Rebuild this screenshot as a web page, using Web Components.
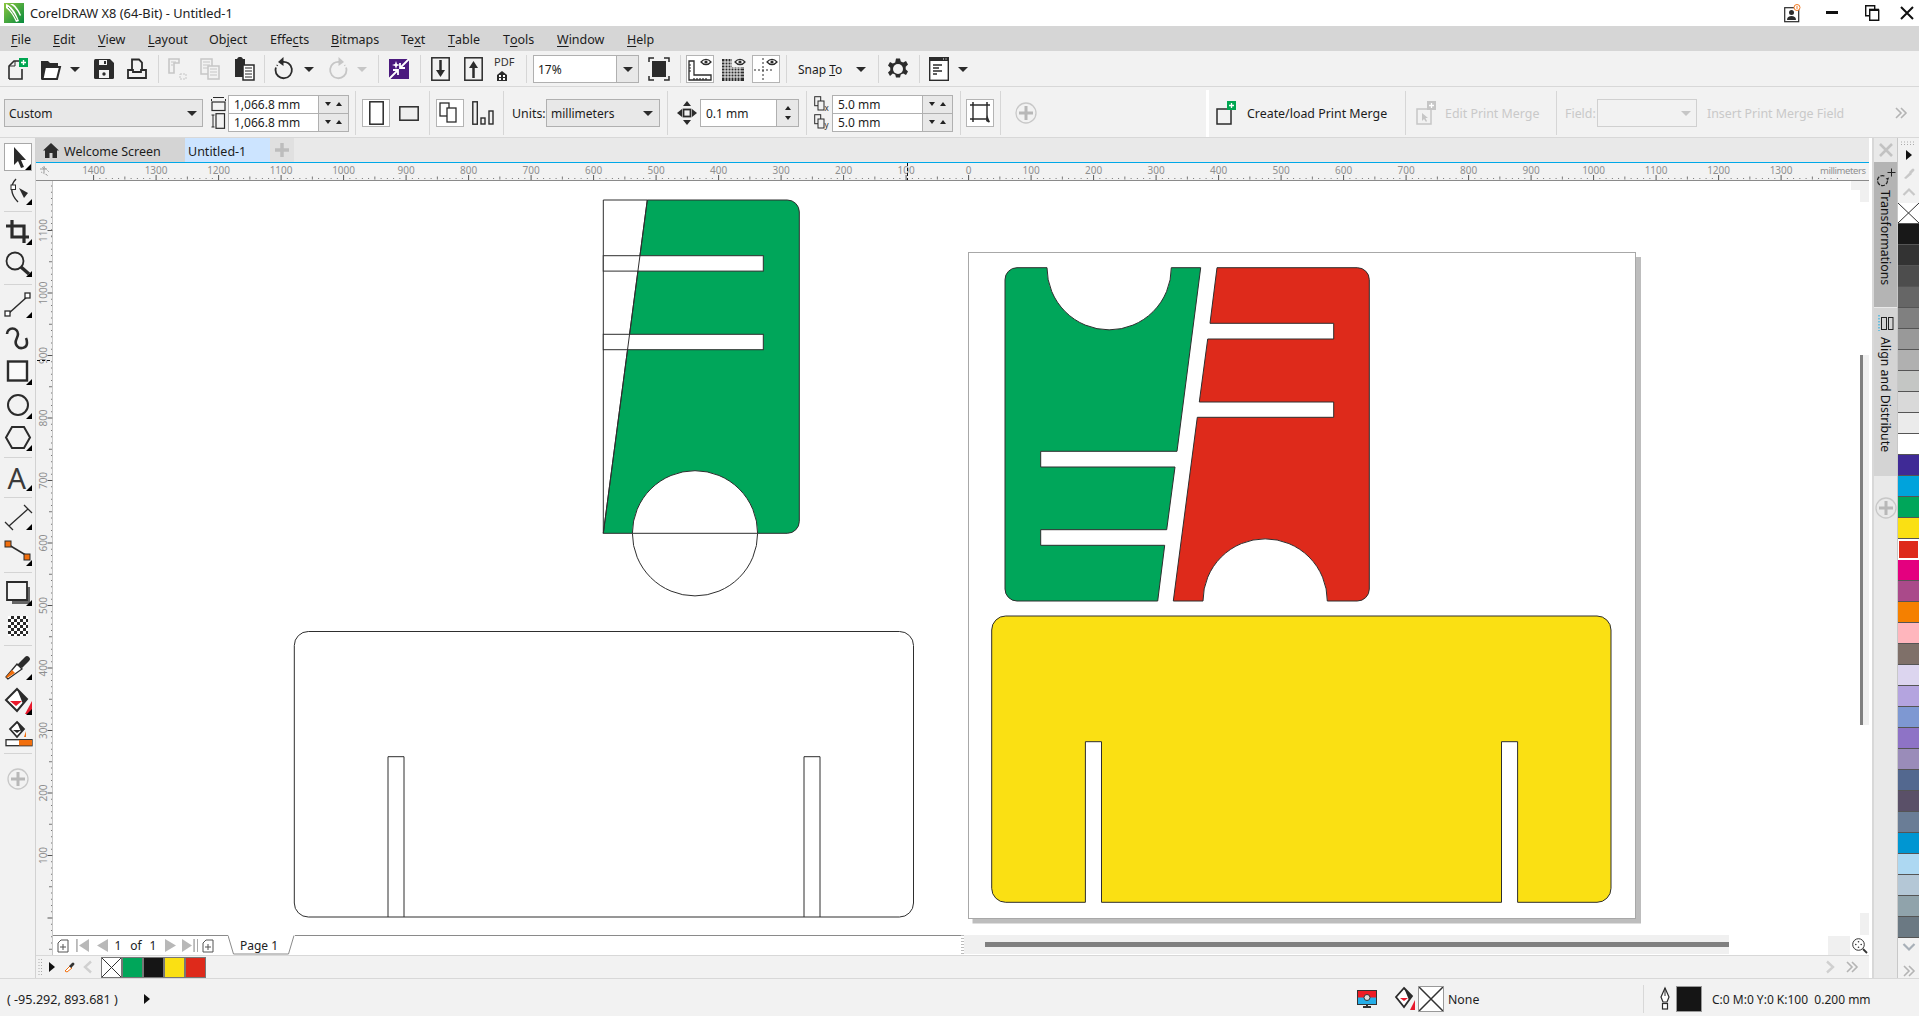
<!DOCTYPE html>
<html><head><meta charset="utf-8"><title>CorelDRAW X8</title>
<style>
html,body{margin:0;padding:0;height:100%;overflow:hidden;background:#f2f2f2}
body{font-family:"Noto Sans","Open Sans",sans-serif;font-size:12px;color:#1c1c1c}
</style></head><body>
<cdr-app>
  <cdr-titlebar slot="top"></cdr-titlebar>
  <cdr-menubar slot="top"></cdr-menubar>
  <cdr-toolbar slot="top"></cdr-toolbar>
  <cdr-propbar slot="top"></cdr-propbar>
  <cdr-toolbox slot="left"></cdr-toolbox>
  <cdr-tabs slot="center"></cdr-tabs>
  <cdr-hruler slot="center"></cdr-hruler>
  <cdr-stage slot="center"></cdr-stage>
  <cdr-colorbar slot="center"></cdr-colorbar>
  <cdr-docker slot="right"></cdr-docker>
  <cdr-palette slot="right"></cdr-palette>
  <cdr-statusbar slot="bottom"></cdr-statusbar>
</cdr-app>
<script>
const D='#2b2b2b',G='#c6c6c6';
const tri=(c=D)=>`<path d="M0 0h10L5 5z" fill="${c}"/>`;
const eye=`<path d="M13 5c3-3.5 7-3.5 10 0c-3 3.5-7 3.5-10 0z" fill="#fff" stroke="${D}" stroke-width="1.2"/><circle cx="18" cy="5" r="1.6" fill="${D}"/>`;
const corner=(c='#000')=>`<path d="M30 21v6h-6z" fill="${c}"/>`;
const ICON={
 logo:[20,20,`<defs><linearGradient id="lg" x1="0" y1="0" x2="1" y2="1"><stop offset="0" stop-color="#8cc63f"/><stop offset="1" stop-color="#078a3f"/></linearGradient></defs><rect width="20" height="20" fill="url(#lg)"/><path d="M2 1c5 2 9 6 13 17l-3 1C9 12 6 8 2 5z" fill="#fff"/><path d="M6 1c4 2 8 7 10 12l1-1C15 7 12 3 9 1z" fill="#fff"/><path d="M4 4c3 3 6 7 9 13" stroke="#4a9e35" fill="none"/>`],
 user:[16,18,`<rect x=".7" y="3.7" width="14" height="14" fill="#fff" stroke="${D}" stroke-width="1.2"/><circle cx="7.5" cy="8.5" r="2.5" fill="${D}"/><path d="M3 16c0-3 2-4 4.500-4s4.500 1 4.500 4z" fill="${D}"/><circle cx="13" cy="3.500" r="3" fill="#fff" stroke="#f47a20"/><path d="M13 2v3" stroke="#f47a20"/>`],
 min:[12,4,`<rect width="12" height="3" fill="#111"/>`],
 restore:[14,16,`<path d="M.7 .7h9v10h-9z" fill="none" stroke="#111" stroke-width="1.4"/><path d="M4.700 5.200h9v10h-9z" fill="#fff" stroke="#111" stroke-width="1.400"/><path d="M4 4.700h10" stroke="#111" stroke-width="2"/>`],
 close:[14,14,`<path d="M1 1l12 12M13 1L1 13" stroke="#111" stroke-width="2"/>`],
 new:[22,22,`<path d="M2 21V8l5-5h5M15 11v10H2" fill="none" stroke="${D}" stroke-width="1.600"/><path d="M8 3v5H2" fill="none" stroke="${D}" stroke-width="1"/><rect x="12" y="0" width="9" height="9" fill="#00a651"/><path d="M16.500 2v5M14 4.500h5" stroke="#fff" stroke-width="1.400"/>`],
 open:[20,22,`<path d="M0 3h7l2 2h8v4H4l-2 12H0z" fill="${D}"/><path d="M4 9h15l-3 12H1.500z" fill="#fff" stroke="${D}" stroke-width="2"/>`],
 t:[10,5,tri()],td:[10,5,tri(G)],
 save:[20,20,`<path d="M0 1.500Q0 0 1.500 0H16l4 4v14.500q0 1.500-1.500 1.500H1.500Q0 20 0 18.500z" fill="${D}"/><rect x="5" y="1" width="8" height="5" fill="#f2f2f2"/><rect x="10" y="2" width="2" height="3" fill="${D}"/><rect x="5" y="11" width="10" height="8" fill="#f2f2f2"/><circle cx="10" cy="15" r="1.700" fill="${D}"/>`],
 print:[20,22,`<path d="M5 12V1.500h7l3 3V12" fill="none" stroke="${D}" stroke-width="1.800"/><path d="M1 12h5v2h8v-2h5v8H1z" fill="none" stroke="${D}" stroke-width="1.800"/>`],
 cutD:[20,22,`<path d="M1 1h10v4h-5v10H1z" fill="none" stroke="${G}" stroke-width="1.600"/><path d="M3 4h5M3 7h2" stroke="${G}"/><path d="M12 16h6v5h-6z" fill="none" stroke="${G}" stroke-dasharray="2 1"/>`],
 copyD:[20,22,`<path d="M1 1h11v15H1z" fill="#f2f2f2" stroke="${G}" stroke-width="1.500"/><path d="M3 4h7M3 7h7M3 10h7" stroke="${G}"/><path d="M8 8h11v13H8z" fill="#f2f2f2" stroke="${G}" stroke-width="1.500"/><path d="M10 11h7M10 14h7M10 17h7" stroke="${G}"/>`],
 paste:[20,24,`<path d="M1 2h2q1-2 2-2h2q1 0 2 2h2v18H1z" fill="${D}"/><rect x="9" y="8" width="11" height="15" fill="#fff" stroke="${D}" stroke-width="1.500"/><path d="M11 11h7M11 14h7M11 17h7M11 20h7" stroke="${D}" stroke-width="1.200"/>`],
 undo:[20,24,`<path d="M8 5a8.200 8.200 0 1 1-6.500 8" fill="none" stroke="${D}" stroke-width="1.800"/><path d="M1.500 13a8 8 0 0 1 2-5" fill="none" stroke="${D}" stroke-width="1.800" stroke-dasharray="2.500 2"/><path d="M9.500 0v9L4 5z" fill="${D}"/>`],
 redo:[20,24,`<path d="M12 5a8.200 8.200 0 1 0 6.500 8" fill="none" stroke="${G}" stroke-width="1.800"/><path d="M18.500 13a8 8 0 0 0-2-5" fill="none" stroke="${G}" stroke-width="1.800" stroke-dasharray="2.500 2"/><path d="M10.500 0v9L16 5z" fill="${G}"/>`],
 purple:[20,20,`<rect width="20" height="20" fill="#4b1a7e"/><path d="M20 0L11 9M11 4v5h5" stroke="#fff" stroke-width="1.800" fill="none"/><path d="M0 20l9-9M4 11h5v5" stroke="#fff" stroke-width="1.800" fill="none"/><path d="M6 5l1-3 1 3 3 1-3 1-1 3-1-3-3-1z" fill="#fff"/>`],
 imp:[19,24,`<rect x=".8" y=".8" width="17.400" height="22.400" fill="none" stroke="${D}" stroke-width="1.500"/><path d="M9.500 3v12" stroke="${D}" stroke-width="2.500"/><path d="M5 13h9l-4.500 7z" fill="${D}"/>`],
 exp:[19,24,`<rect x=".8" y=".8" width="17.400" height="22.400" fill="none" stroke="${D}" stroke-width="1.500"/><path d="M9.500 21V9" stroke="${D}" stroke-width="2.500"/><path d="M5 11h9L9.500 4z" fill="${D}"/>`],
 pdf:[22,26,`<text x="0" y="10" font-family="Noto Sans,sans-serif" font-size="11" fill="#333">PDF</text><path d="M3 19l5-4 5 4v6H3z" fill="${D}"/><path d="M5 19h2v2H5zM9 19h2v2H9zM5 22h2v2H5zM9 22h2v2H9z" fill="#fff"/>`],
 fit:[20,24,`<path d="M0 5V1h5M15 1h5v4M20 19v4h-5M5 23H0v-4" fill="none" stroke="${D}" stroke-width="1.500"/><rect x="3" y="4" width="14" height="16" fill="${D}"/>`],
 rulers:[24,24,eye+`<path d="M1 4h5v14h17v5H1z" fill="none" stroke="${D}" stroke-width="1.300"/><path d="M1 8h2M1 11h2M1 14h2M9 23v-2M12 23v-2M15 23v-2M18 23v-2M6 23v-2" stroke="${D}" stroke-width="1.200"/>`],
 grid:[22,24,eye+`<path d="M0 2h10v8h12v14H0z" fill="${D}"/><path d="M3 2v22M6 2v22M9 2v22M12 10v14M15 10v14M18 10v14M0 5h10M0 8h10M0 11h22M0 14h22M0 17h22M0 20h22" stroke="#f2f2f2"/>`],
 guides:[24,24,eye+`<path d="M9 1v22M0 13h18" stroke="${D}" stroke-dasharray="2 2"/>`],
 gear:[22,24,`<path d="M9 1h4l.8 3 2.400 1 2.800-1.500 2 3.500-2.300 2.200v2.600l2.300 2.200-2 3.500-2.800-1.500-2.400 1-.8 3H9l-.8-3-2.400-1L3 18.500 1 15l2.300-2.200v-2.600L1 8l2-3.500L5.800 6l2.400-1z" fill="${D}" transform="translate(0,.5)"/><circle cx="11" cy="12" r="5" fill="#f2f2f2"/>`],
 win:[20,24,`<rect x=".7" y=".7" width="18.600" height="22.600" fill="#fff" stroke="${D}" stroke-width="1.400"/><rect y="0" width="20" height="4" fill="${D}"/><path d="M14 2h1M16.500 2h1" stroke="#fff"/><path d="M4 8h9M4 11h6M4 14h9M4 17h4" stroke="${D}" stroke-width="1.300"/>`],
 wh:[15,14,`<path d="M2 .5h11M.5 2v2M14.500 2v2" stroke="${D}"/><rect x="1" y="5" width="13" height="8.500" fill="none" stroke="${D}" stroke-width="1.200"/>`],
 hh:[14,16,`<path d="M.5 2h3M.5 14h3M2 2v12" stroke="${D}"/><rect x="5" y=".7" width="8.500" height="14.600" fill="none" stroke="${D}" stroke-width="1.200"/>`],
 port:[15,24,`<rect x=".8" y=".8" width="13.400" height="22.400" fill="#fff" stroke="${D}" stroke-width="1.500"/>`],
 land:[20,15,`<rect x=".8" y=".8" width="18.400" height="13.400" fill="#eee" stroke="${D}" stroke-width="1.500"/>`],
 allp:[22,22,`<rect x="1" y="1" width="9" height="13" fill="#fff" stroke="${D}" stroke-width="1.300"/><rect x="8" y="6" width="9" height="14" fill="#fff" stroke="${D}" stroke-width="1.300"/>`],
 curp:[22,24,`<rect x=".8" y=".8" width="4.500" height="22.400" fill="none" stroke="${D}" stroke-width="1.400"/><rect x="9" y="17" width="4" height="6" fill="none" stroke="${D}" stroke-width="1.400"/><rect x="17" y="10" width="4" height="13" fill="none" stroke="${D}" stroke-width="1.400"/>`],
 nudge:[20,24,`<path d="M10 0l4 5H6zM10 24l-4-5h8zM0 12l5-4v8zM20 12l-5 4V8z" fill="${D}"/><rect x="6.500" y="8.500" width="7" height="7" fill="none" stroke="${D}" stroke-width="1.800"/>`],
 dupx:[16,16,`<rect x=".7" y=".7" width="6" height="9" fill="none" stroke="${D}"/><rect x="4" y="5" width="6" height="9" fill="#f2f2f2" stroke="${D}"/><text x="10.500" y="15" font-family="Noto Sans,sans-serif" font-size="8" fill="${D}">x</text>`],
 dupy:[16,16,`<rect x=".7" y=".7" width="6" height="9" fill="none" stroke="${D}"/><rect x="4" y="5" width="6" height="9" fill="#f2f2f2" stroke="${D}"/><text x="10.500" y="14" font-family="Noto Sans,sans-serif" font-size="8" fill="${D}">y</text>`],
 treat:[20,22,`<path d="M3 3h14v14H3z" fill="none" stroke="${D}" stroke-width="1.400"/><path d="M0 3h3M3 0v3M17 0v3M17 3h3M0 17h3M3 17v3" stroke="${D}" stroke-width="1.500"/><path d="M17 13l3 7-1.500.5L16 19z" fill="${D}"/>`],
 plus:[22,22,`<circle cx="11" cy="11" r="10" fill="none" stroke="#c8c8c8" stroke-width="1.300"/><path d="M11 4v14M4 11h14" stroke="#b8b8b8" stroke-width="3"/>`],
 merge:[20,24,`<rect x="1" y="8" width="14" height="15" fill="none" stroke="${D}" stroke-width="1.500"/><rect x="11" y="0" width="9" height="9" fill="#00a651"/><path d="M15.500 2v5M13 4.500h5" stroke="#fff" stroke-width="1.300"/>`],
 mergeD:[20,24,`<rect x="1" y="8" width="14" height="15" fill="none" stroke="${G}" stroke-width="1.500"/><rect x="11" y="0" width="9" height="9" fill="${G}"/><path d="M15.500 2v5M13 4.500h5" stroke="#fff" stroke-width="1.300"/><path d="M6 12v8l2-2 2 3 1-1-1.500-3H12z" fill="${G}"/>`],
 more:[12,12,`<path d="M1 1l5 5-5 5M6 1l5 5-5 5" fill="none" stroke="#b4b4b4" stroke-width="1.600"/>`],
 home:[16,15,`<path d="M8 0l8 7.500h-2V15H9.500v-5h-3v5H2V7.500H0z" fill="#2d2d2d"/>`],
 plusTab:[14,14,`<path d="M7 0v14M0 7h14" stroke="#bdbdbd" stroke-width="3.500"/>`],
 rc:[12,12,`<path d="M5 1v7M1 4h7" stroke="#9a9a9a"/><path d="M2 7l6 3M5 2l5 5M3 2l2 2M7 9l2 2" stroke="#9a9a9a" stroke-dasharray="1 1"/>`],
 pick:[28,28,`<path d="M10 4v18l4-4 3 7 3-1-3-7h5z" fill="#2b2b2b"/><path d="M27 21v6h-6z" fill="#000"/>`],
 shape:[32,28,`<path d="M14 1C8 7 8 16 16 24" fill="none" stroke="${D}" stroke-width="1.400"/><rect x="9" y="7" width="4.500" height="4.500" fill="#fff" stroke="${D}"/><path d="M17 10l9 5-4 5z" fill="${D}"/>`+corner()],
 crop:[32,28,`<path d="M10 2v17h17M4 8h18v17" fill="none" stroke="${D}" stroke-width="3.200"/>`+corner()],
 zoom:[32,28,`<circle cx="13" cy="11" r="8.500" fill="none" stroke="${D}" stroke-width="1.800"/><path d="M19 17l8 7" stroke="${D}" stroke-width="3.500"/>`+corner()],
 line:[32,28,`<path d="M6 23L26 5" stroke="${D}" stroke-width="1.500"/><rect x="3" y="20" width="5" height="5" fill="#fff" stroke="${D}" stroke-width="1.300"/><rect x="23" y="2" width="5" height="5" fill="#fff" stroke="${D}" stroke-width="1.300"/>`+corner()],
 art:[32,28,`<path d="M5 9a5.500 5.500 0 0 1 11 0c0 5-5 7-1 12 3 4 10 2 10-3 0-2 0-3-1-5" fill="none" stroke="${D}" stroke-width="2.600"/>`],
 rect:[32,28,`<rect x="6" y="3.500" width="19" height="19" fill="#fafafa" stroke="${D}" stroke-width="2.400"/>`+corner()],
 ell:[32,28,`<circle cx="16" cy="13" r="10" fill="none" stroke="${D}" stroke-width="2"/>`+corner()],
 poly:[32,28,`<path d="M10 3h12l6 10.500L22 24H10L4 13.500z" fill="none" stroke="${D}" stroke-width="2"/>`+corner()],
 A:[32,28,`<text x="5.500" y="24.500" font-family="Noto Sans,sans-serif" font-size="29" fill="#3a3a3a">A</text>`+corner()],
 dim:[32,28,`<path d="M7 23L26 6M3 19l8 8M22 2l8 8" stroke="${D}" stroke-width="1.300"/>`+corner()],
 conn:[32,28,`<path d="M7 6l20 12" stroke="${D}" stroke-width="1.500"/><rect x="3" y="2" width="6" height="6" fill="#f26f0d" stroke="${D}"/><rect x="22" y="15" width="6" height="6" fill="#f26f0d" stroke="${D}"/>`+corner()],
 shad:[32,28,`<path d="M10 8h18v17H10z" fill="#666"/><path d="M5 3h20v18H5z" fill="#f5f5f5" stroke="${D}" stroke-width="1.800"/>`+corner()],
 transp:[20,20,`<defs><pattern id="ck" width="6" height="6" patternUnits="userSpaceOnUse"><rect width="6" height="6" fill="#2a2a2a"/><rect width="3" height="3" fill="#fff"/><rect x="3" y="3" width="3" height="3" fill="#fff"/></pattern></defs><rect width="20" height="20" fill="url(#ck)"/>`],
 drop:[32,28,`<path d="M6 26l-2-2 11-13 5 5z" fill="#fff" stroke="${D}" stroke-width="1.300"/><path d="M5 25l-1-1 6-7 3 3z" fill="#f26f0d"/><path d="M15 12l5-5 3-3a2.500 2.500 0 0 1 4 4l-3 3-1 1-3 3z" fill="${D}"/>`+corner()],
 fill:[32,28,`<path d="M15 1l10 10-10 12L4 12z" fill="#fff" stroke="${D}" stroke-width="2"/><path d="M15 1l10 10-4 5z" fill="${D}"/><path d="M8 13h12l-6 5z" fill="#e8192c"/><path d="M30 13v13h-7z" fill="#e8192c"/>`+corner()],
 smart:[32,28,`<path d="M15 1l7 7-7 8-7-8z" fill="#fff" stroke="${D}" stroke-width="1.800"/><path d="M15 1l7 7-3 3z" fill="${D}"/><path d="M11 9h8l-4 3z" fill="${D}"/><path d="M24 10v6h-2z" fill="#f26f0d"/><rect x="4" y="18.700" width="26" height="6" fill="#fff" stroke="${D}" stroke-width="1.300"/><rect x="17" y="19" width="13" height="5.500" fill="#f26f0d"/>`],
 addp:[12,14,`<path d="M1 13V4l3-3h7v12z" fill="none" stroke="#555"/><path d="M6 5v6M3 8h6" stroke="#555"/>`],
 first:[14,13,`<rect x="0" width="1.800" height="13" fill="#b8b8b8"/><path d="M13 0v13L3 6.500z" fill="#b8b8b8"/>`],
 prev:[11,13,`<path d="M11 0v13L0 6.500z" fill="#b8b8b8"/>`],
 next:[11,13,`<path d="M0 0v13l11-6.500z" fill="#b8b8b8"/>`],
 last:[14,13,`<rect x="12.200" width="1.800" height="13" fill="#b8b8b8"/><path d="M1 0v13l10-6.500z" fill="#b8b8b8"/>`],
 ptr:[6,10,`<path d="M0 0l6 5-6 5z" fill="#111"/>`],
 dropS:[10,10,`<path d="M1 9l5-5 2 2-5 4z" fill="#fff" stroke="#f26f0d"/><path d="M5 4l3-3a1.200 1.200 0 0 1 2 2L7 6z" fill="#333"/>`],
 dropD:[11,11,`<path d="M1 10l6-6 2 2-6 5z" fill="#c8c8c8"/><path d="M6 4l3-3a1.300 1.300 0 0 1 2 2L8 6z" fill="#c8c8c8"/>`],
 chL:[10,12,`<path d="M8 .5L2 6l6 5.500" fill="none" stroke="#d0d0d0" stroke-width="2.400"/>`],
 chR:[10,12,`<path d="M2 .5L8 6l-6 5.500" fill="none" stroke="#d0d0d0" stroke-width="2.400"/>`],
 chU:[12,8,`<path d="M.5 7L6 1.500 11.500 7" fill="none" stroke="#c8c8c8" stroke-width="2.200"/>`],
 chD:[12,8,`<path d="M.5 1L6 6.500 11.500 1" fill="none" stroke="#a8b0b8" stroke-width="2.200"/>`],
 zoomS:[15,15,`<circle cx="6.500" cy="6.500" r="5.800" fill="#fff" stroke="#333"/><circle cx="6.500" cy="3.800" r=".8" fill="#333"/><circle cx="6.500" cy="9.200" r=".8" fill="#333"/><circle cx="3.800" cy="6.500" r=".8" fill="#333"/><circle cx="9.200" cy="6.500" r=".8" fill="#333"/><path d="M11 11l4 4" stroke="#333" stroke-width="1.800"/>`],
 mon:[20,18,`<rect x=".5" y=".5" width="19" height="14" fill="#25aee8" stroke="#333"/><rect x="1" y="1" width="18" height="6.500" fill="#ee1c25"/><circle cx="10" cy="7.500" r="3" fill="#ddd" stroke="#333"/><path d="M6 17h8M10 14v3" stroke="#333" stroke-width="2"/>`],
 fillS:[20,24,`<path d="M9 1l8 8-8 11-8-10z" fill="#fff" stroke="${D}" stroke-width="1.800"/><path d="M9 1l8 8-3 4z" fill="${D}"/><path d="M5 11h8l-4 3z" fill="#e8192c"/><path d="M20 13v10h-5z" fill="#e8192c"/>`],
 pen:[10,22,`<path d="M5 0l4 9-2 5H3L1 9z" fill="#fff" stroke="${D}" stroke-width="1.200"/><path d="M5 0v8" stroke="${D}"/><rect x="2.500" y="15.500" width="5" height="5.500" fill="#fff" stroke="${D}" stroke-width="1.200"/>`],
 tr:[20,20,`<path d="M15.500 0.500v8M11.500 4.500h8" stroke="#222"/><path d="M13.200 9.500l-1.200 2.800-2.400-1.800z" fill="#222"/><path d="M11.500 12.500a5 5 0 1 1-3-4.500" fill="none" stroke="#222" stroke-width="1.200" stroke-dasharray="4 1.200"/>`],
 al:[16,16,`<path d="M1 0v16" stroke="#00a8e8" stroke-dasharray="1.500 1.500"/><rect x="3.500" y="2.500" width="5" height="12" fill="none" stroke="#222"/><rect x="10.500" y="2.500" width="4.500" height="12" fill="none" stroke="#222"/>`],
 xBig:[14,14,`<path d="M1 1l12 12M13 1L1 13" stroke="#c2c2c2" stroke-width="2.600"/>`],
 dots:[15,4,`<path d="M0 1h15M0 3.500h15" stroke="#aaa" stroke-dasharray="1 2"/>`],
 dotsV:[5,16,`<path d="M1 0v16M3.500 0v16" stroke="#aaa" stroke-dasharray="1 2"/>`]
};
const ic=n=>{const[w,h,s]=ICON[n];return `<svg width="${w}" height="${h}" viewBox="0 0 ${w} ${h}" style="display:block;flex:none;overflow:visible">${s}</svg>`};
const CELL=`.it{flex:none;display:flex;align-items:center;justify-content:center;white-space:nowrap}.l{justify-content:flex-start}`;
/* lay items out in flow: margin between consecutive boxes */
function seq(items,start,axis='x'){let p=start,o='';for(const[a,size,html,cls,extra]of items){const m=a-p;o+=`<div class="it ${cls||''}" style="${axis==='x'?`margin-left:${m}px;width:${size}px`:`margin-top:${m}px;height:${size}px`};${extra||''}">${html}</div>`;p=a+size}return o}
const cx=(c,n,w)=>[c-(w||ICON[n][0])/2,w||ICON[n][0],ic(n)];
const sep=(x,h=28)=>[x,1,'','',`background:#d6d6d6;height:${h}px`];
class Base extends HTMLElement{constructor(){super();this.attachShadow({mode:'open'}).innerHTML=`<style>${CELL}${this.css()}</style>${this.html()}`}css(){return''}html(){return''}}

class App extends Base{css(){return`:host{display:flex;flex-direction:column;width:1919px;height:1016px;overflow:hidden;background:#f2f2f2}
.work{display:flex;flex:none;height:840px}.c{width:1833px;flex:none;display:flex;flex-direction:column}.right{display:flex;flex:none}`}
html(){return`<slot name="top"></slot><div class="work"><slot name="left"></slot><div class="c"><slot name="center"></slot></div><div class="right"><slot name="right"></slot></div></div><slot name="bottom"></slot>`}}
customElements.define('cdr-app',App);

class Title extends Base{css(){return`:host{display:flex;height:26px;background:#fff;align-items:center;font-size:12.800px;color:#222}`}
html(){return seq([[4,20,ic('logo')],[30,200,'CorelDRAW X8 (64-Bit) - Untitled-1','l'],cx(1792,'user'),cx(1832,'min'),cx(1872,'restore'),cx(1907,'close')],0)}}
customElements.define('cdr-titlebar',Title);

class Menu extends Base{css(){return`:host{display:flex;height:25px;box-sizing:border-box;padding-top:2px;background:#d6d6d6;align-items:center;font-size:12.500px;color:#1c1c1c}u{text-underline-offset:2px}`}
html(){const m=[[11,'<u>F</u>ile'],[53,'<u>E</u>dit'],[98,'<u>V</u>iew'],[148,'<u>L</u>ayout'],[209,'Ob<u>j</u>ect'],[270,'Effe<u>c</u>ts'],[331,'<u>B</u>itmaps'],[401,'Te<u>x</u>t'],[448,'<u>T</u>able'],[503,'T<u>o</u>ols'],[557,'<u>W</u>indow'],[627,'<u>H</u>elp']];
return seq(m.map(([x,t],i)=>[x,(i<11?m[i+1][0]:x+40)-x,t,'l']),0)}}
customElements.define('cdr-menubar',Menu);

class Combo extends Base{css(){const w=this.getAttribute('w')||100,h=this.getAttribute('h')||28,white=this.hasAttribute('white'),dis=this.hasAttribute('dis');
return`:host{display:flex;width:${w}px;height:${h}px;box-sizing:border-box;border:1px solid ${dis?'#d0d0d0':'#b0b0b0'};background:${white||dis?(dis?'#f2f2f2':'#fff'):'#e8e8e8'};align-items:center;font-size:12px;padding-left:${this.getAttribute('p')||4}px}
span{flex:1;white-space:nowrap}.a{flex:none;width:${this.getAttribute('aw')||20}px;align-self:stretch;display:flex;align-items:center;justify-content:center;${white?'background:#e8e8e8;border-left:1px solid #b0b0b0':''}}`}
html(){return`<span>${this.getAttribute('value')||''}</span><div class="a">${ic(this.hasAttribute('dis')?'td':'t')}</div>`}}
customElements.define('cdr-combo',Combo);

class Toolbar extends Base{css(){return`:host{display:flex;height:36px;box-sizing:border-box;padding-top:1px;background:#f2f2f2;align-items:center;border-bottom:1px solid #d8d8d8}
.box{width:28px;height:28px;box-sizing:border-box;border:1px solid #b4b4b4;background:#fff;display:flex;align-items:center;justify-content:center}`}
html(){const box=n=>`<div class="box">${ic(n)}</div>`;
return seq([cx(18,'new'),cx(51,'open'),cx(75,'t'),cx(104,'save'),cx(137,'print'),sep(158),cx(178,'cutD'),cx(210,'copyD'),cx(244,'paste'),sep(264),cx(284,'undo'),cx(309,'t'),cx(338,'redo'),cx(362,'td'),sep(378),cx(399,'purple'),sep(420),cx(440,'imp'),cx(473,'exp'),cx(505,'pdf'),sep(526),
[533,106,'<cdr-combo value="17%" w="106" h="28" white aw="21"></cdr-combo>'],
cx(659,'fit'),sep(680),[686,28,box('rulers')],cx(733,'grid'),[752,28,box('guides')],sep(786),[798,50,'<span style="padding-top:1px">Snap&nbsp;<u>T</u>o</span>','l'],cx(861,'t'),sep(878),cx(898,'gear'),sep(919),cx(939,'win'),cx(963,'t')],0)}}
customElements.define('cdr-toolbar',Toolbar);

class Spin extends Base{css(){const w=+this.getAttribute('w'),s=+this.getAttribute('s');return`:host{display:flex;width:${w+s}px;height:19px;box-sizing:border-box;border:1px solid #b0b0b0;background:#fff;font-size:12px;align-items:center}
span{width:${w-1}px;padding-left:5px;box-sizing:border-box;white-space:nowrap}.s{flex:1;align-self:stretch;background:#e8e8e8;border-left:1px solid #b0b0b0;display:flex;align-items:center;justify-content:space-around;padding:0 4px}
.d,.u{width:0;height:0;border:3.500px solid transparent}.d{border-top:4px solid #222;border-bottom:0}.u{border-bottom:4px solid #222;border-top:0}`}
html(){return`<span>${this.getAttribute('value')}</span><div class="s"><div class="d"></div><div class="u"></div></div>`}}
customElements.define('cdr-spin',Spin);

class Nudge extends Base{css(){return`:host{display:flex;width:99px;height:28px;box-sizing:border-box;border:1px solid #b0b0b0;background:#fff;font-size:12px;align-items:center}
span{flex:1;padding-left:5px;white-space:nowrap}.s{width:21px;align-self:stretch;background:#e8e8e8;border-left:1px solid #b0b0b0;display:flex;flex-direction:column;align-items:center;justify-content:space-evenly}
.d,.u{width:0;height:0;border:3.500px solid transparent}.d{border-top:4px solid #222;border-bottom:0}.u{border-bottom:4px solid #222;border-top:0}`}
html(){return`<span>0.1 mm</span><div class="s"><div class="u"></div><div class="d"></div></div>`}}
customElements.define('cdr-nudge',Nudge);

class Prop extends Base{css(){return`:host{display:flex;height:51px;box-sizing:border-box;padding-top:2px;background:#f2f2f2;align-items:center;border-bottom:1px solid #d8d8d8;font-size:12.400px}
.box{width:28px;height:28px;box-sizing:border-box;border:1px solid #b4b4b4;background:#fff;display:flex;align-items:center;justify-content:center}
.st{display:flex;flex-direction:column;gap:0}.st>:nth-child(2){margin-top:-1px}.ic2{display:flex;flex-direction:column;gap:2px}
.dim{color:#c9c9c9}`}
html(){const box=n=>`<div class="box">${ic(n)}</div>`,sp=(a,b,w,s)=>`<div class="st"><cdr-spin value="${a}" w="${w}" s="${s}"></cdr-spin><cdr-spin value="${b}" w="${w}" s="${s}"></cdr-spin></div>`;
return seq([[4,199,'<cdr-combo value="Custom" w="199"></cdr-combo>'],
[210,16,`<div class="ic2">${ic('wh')}${ic('hh')}</div>`],[228,121,sp('1,066.8 mm','1,066.8 mm',90,31)],sep(355,44),
[362,28,box('port')],cx(409,'land'),sep(429,44),[436,28,box('allp')],cx(483,'curp'),sep(503,44),[512,34,'Units:','l'],
[546,114,'<cdr-combo value="millimeters" w="114" aw="22"></cdr-combo>'],sep(667,44),cx(687,'nudge'),[700,99,'<cdr-nudge></cdr-nudge>'],sep(806,44),
[814,16,`<div class="ic2">${ic('dupx')}${ic('dupy')}</div>`],[832,121,sp('5.0 mm','5.0 mm',90,31)],sep(960,44),[966,28,box('treat')],sep(1000,44),cx(1026,'plus'),
[1206,3,'','','background:#fff;height:47px'],cx(1226,'merge'),[1247,146,'Create/load Print Merge','l'],sep(1405,44),cx(1426,'mergeD'),[1445,96,'Edit Print Merge','l dim'],sep(1556,44),
[1565,32,'Field:','l dim'],[1597,100,'<cdr-combo w="100" dis></cdr-combo>'],[1707,138,'Insert Print Merge Field','l dim'],cx(1901,'more')],0)}}
customElements.define('cdr-propbar',Prop);

class Toolbox extends Base{css(){return`:host{display:flex;flex-direction:column;width:35px;flex:none;height:840px;background:#f2f2f2;border-right:1px solid #d2d2d2;align-items:center;box-sizing:content-box}
.pk{width:28px;height:28px;box-sizing:border-box;background:#fff;border:1px solid #a8a8a8;display:flex;align-items:center;justify-content:center}.pk svg{margin:-1px}`}
html(){const S=y=>[y-1,1,'','','background:#d4d4d4;width:28px'];const I=(c,n)=>[c-ICON[n][1]/2,ICON[n][1],ic(n)];
return seq([[143,28,`<div class="pk">${ic('pick')}</div>`],I(192,'shape'),S(212),I(232,'crop'),I(264,'zoom'),S(285),I(305,'line'),I(339,'art'),I(372,'rect'),I(406,'ell'),I(438,'poly'),S(458),I(478,'A'),S(498),I(517,'dim'),I(553,'conn'),S(573),I(593,'shad'),I(626,'transp'),S(646),I(667,'drop'),I(702,'fill'),I(735,'smart'),S(754),I(779,'plus')],138,'y')}}
customElements.define('cdr-toolbox',Toolbox);

class Tabs extends Base{css(){return`:host{display:flex;height:25px;box-sizing:border-box;background:#e9e9e9;border-bottom:1px solid #00a8e8;font-size:12.500px;align-items:stretch}
.h{background:#d4d4d4;width:149px;display:flex;align-items:center;gap:5px;padding-left:7px;box-sizing:border-box}.a{background:#cce4ff;width:85px;display:flex;align-items:center;padding-left:3px;box-sizing:border-box}.p{background:#e0e0e0;width:24px;display:flex;align-items:center;justify-content:center}span,.a{padding-top:3px}`}
html(){return`<div class="h">${ic('home')}<span>Welcome Screen</span></div><div class="a">Untitled-1</div><div class="p">${ic('plusTab')}</div>`}}
customElements.define('cdr-tabs',Tabs);

const txt='font-family="Noto Sans,sans-serif" font-size="10" fill="#8f8f8f"';
class HRuler extends Base{css(){return`:host{display:block;height:18px;background:#f2f2f2}svg{display:block}`}
html(){let s='';const Z=968.6;for(let k=-14;k<=13;k++){const x=Z+k*62.5;s+=`<text x="${x}" y="174" text-anchor="middle" ${txt}>${Math.abs(k*100)}</text><path d="M${x} 175v5" stroke="#555"/>`;for(let j=0;j<10;j++){const xx=x+j*6.25;if(j==5)s+=`<path d="M${xx} 176.500v3" stroke="#777"/>`;else if(j)s+=`<path d="M${xx} 178v1" stroke="#777"/>`}}
s=`<rect x="36" y="163" width="1833" height="18" fill="#f2f2f2"/>`+s+`<rect x="1816" y="164" width="53" height="13" fill="#f2f2f2"/><text x="1820" y="174" font-family="Noto Sans,sans-serif" font-size="9.500" fill="#8f8f8f" textLength="46">millimeters</text><rect x="36" y="180" width="1833" height="1" fill="#8a8a8a"/><path d="M907.500 163v17" stroke="#111" stroke-dasharray="3 2"/><g transform="translate(39 165)">${ICON.rc[2]}</g>`;
return`<svg width="1833" height="18" viewBox="36 163 1833 18">${s}</svg>`}}
customElements.define('cdr-hruler',HRuler);

class VRuler extends Base{css(){return`:host{display:block;width:17px;height:774px;flex:none;background:#f2f2f2}svg{display:block}`}
html(){let s='';for(let v=0;v<=1200;v+=100){const y=918-v*.625;if(y<181)continue;if(v)s+=`<text transform="translate(47 ${y}) rotate(-90)" text-anchor="middle" ${txt}>${v}</text>`;s+=`<path d="M47.500 ${y}h5" stroke="#555"/>`;for(let j=0;j<10;j++){const yy=y+j*6.25;if(yy>951)break;if(j==5)s+=`<path d="M49 ${yy}h3" stroke="#777"/>`;else if(j)s+=`<path d="M51 ${yy}h1" stroke="#777"/>`}}
for(let y=186;y<240;y+=6.25)s+=`<path d="M51 ${y}h1" stroke="#777"/>`;
return`<svg width="17" height="774" viewBox="36 181 17 774">${s}<path d="M37 360.500h15" stroke="#111" stroke-dasharray="3 2"/><rect x="52.500" y="181" width="1" height="774" fill="#9a9a9a"/></svg>`}}
customElements.define('cdr-vruler',VRuler);

class Drawing extends Base{css(){return`:host{display:block;width:1807px;height:754px;background:#fff}svg{display:block}`}
html(){const st='stroke="#2e2e2e" stroke-width="1"',G='#00a65a',R='#de2a1b',Y='#fae013';
return`<svg width="1807" height="754" viewBox="53 181 1807 754">
<rect x="1851" y="181" width="9" height="9" fill="#f0f0f0"/>
<path d="M647.300 200H787.300a12 12 0 0 1 12 12V521.300a12 12 0 0 1-12 12H603.300z" fill="${G}" ${st}/>
<path d="M603.300 200H647.300M603.300 200V533.300" fill="none" ${st}/>
<rect x="603.300" y="255.700" width="160" height="15.400" fill="#fff" ${st}/>
<rect x="603.300" y="334.300" width="160" height="15.400" fill="#fff" ${st}/>
<path d="M647.300 200L603.300 533.300" fill="none" ${st}/>
<circle cx="695" cy="533.300" r="62.600" fill="#fff" ${st}/>
<path d="M632.400 533.300H757.600" ${st}/>
<path d="M308.300 631.500H899.500a14 14 0 0 1 14 14V903a14 14 0 0 1-14 14H820V756.700H804V917H404V756.700H388V917H308.300a14 14 0 0 1-14-14V645.500a14 14 0 0 1 14-14z" fill="#fff" ${st}/>
<path d="M388 917H404M804 917H820" ${st}/>
<rect x="972.500" y="257" width="668.500" height="666.500" fill="#bdbdbd"/>
<rect x="968.500" y="252.500" width="667" height="666" fill="#fff" stroke="#a8a8a8"/>
<path d="M1017 267.700H1047A62.150 62.150 0 0 0 1171.300 267.700H1200.700L1177 451.300H1040.700V467H1175L1166.700 529.700H1040.700V545.300H1164.700L1157.700 601H1017a12 12 0 0 1-12-12V279.700a12 12 0 0 1 12-12z" fill="${G}" ${st}/>
<path d="M1217 267.700H1357.300a12 12 0 0 1 12 12V589a12 12 0 0 1-12 12H1327.300A62.150 62.150 0 0 0 1203 601H1173.300L1197.300 417.300H1333.700V402H1199.300L1207.700 339H1333.700V323.300H1210z" fill="${R}" ${st}/>
<path d="M1005.700 616H1597a14 14 0 0 1 14 14V888.300a14 14 0 0 1-14 14H1517.600V741.700H1501.500V902.300H1101.500V741.700H1085.400V902.300H1005.700a14 14 0 0 1-14-14V630a14 14 0 0 1 14-14z" fill="${Y}" ${st}/>
</svg>`}}
customElements.define('cdr-drawing',Drawing);

class VScroll extends Base{css(){return`:host{display:flex;flex-direction:column;width:9px;height:754px;flex:none;background:#fff}
.g{background:#f0f0f0}.t{background:#f0f0f0;height:370px;flex:none}.t i{display:block;width:2.500px;height:100%;background:#808080}`}
html(){return`<div class="g" style="height:21px"></div><div style="height:153px"></div><div class="t"><i></i></div><div style="height:188px"></div><div class="g" style="height:22px"></div>`}}
customElements.define('cdr-vscroll',VScroll);

class PageNav extends Base{css(){return`:host{display:flex;width:1816px;height:20px;background:#fff;align-items:center;font-size:12px;color:#222;box-sizing:border-box}
.rest{display:flex;align-items:center;height:20px}.line{border-top:1px solid #8a8a8a;box-sizing:border-box;height:20px}
.tab{width:67px;height:20px;display:flex;align-items:center;justify-content:center;padding-right:5px;box-sizing:border-box;position:relative;z-index:0}.tab svg{position:absolute;inset:0;z-index:-1}`}
html(){const tab=`<div class="tab"><svg width="67" height="20"><path d="M0 0.500L5.500 19H60.500L66 0.500" fill="#fff" stroke="#8a8a8a"/></svg>Page 1</div>`;
const left=seq([cx(63,'addp'),cx(83,'first'),cx(102,'prev')],53);
return `<div class="rest line" style="width:175px;flex:none">${left}<span style="margin-left:7px;width:6px">1</span><span style="margin-left:7.500px;width:16px;text-align:center">of</span><span style="margin-left:5px;width:8px;text-align:center">1</span>${seq([cx(170,'next'),cx(188,'last'),[197,1,'','','background:#aaa;height:13px'],cx(208,'addp')],157)}</div>${tab}<div class="line" style="width:666px;flex:none"></div><div class="it" style="width:3px;height:20px;background:repeating-linear-gradient(#bbb 0 1px,#fff 1px 3px)"></div><div style="width:765px;flex:none;height:19px;margin-top:-1px;background:#f0f0f0;display:flex;align-items:center;box-sizing:border-box;padding-left:21px"><i style="display:block;width:744px;height:5px;background:#808080"></i></div><div style="width:99px;flex:none"></div><div style="width:22px;height:19px;background:#f0f0f0;flex:none"></div><div class="it" style="width:19px">${ic('zoomS')}</div>`}}
customElements.define('cdr-pagenav',PageNav);

class Stage extends Base{css(){return`:host{display:flex;height:774px;flex:none}.c{display:flex;flex-direction:column;width:1816px;flex:none}.u{display:flex;height:754px;flex:none}`}
html(){return`<cdr-vruler></cdr-vruler><div class="c"><div class="u"><cdr-drawing></cdr-drawing><cdr-vscroll></cdr-vscroll></div><cdr-pagenav></cdr-pagenav></div>`}}
customElements.define('cdr-stage',Stage);

const xSwatch=(w,h,sw=1)=>`<svg width="${w}" height="${h}" style="display:block"><rect width="${w}" height="${h}" fill="#fff"/><path d="M0 0L${w} ${h}M${w} 0L0 ${h}" stroke="#333" stroke-width="${sw}"/></svg>`;
class ColorBar extends Base{css(){return`:host{display:flex;height:23px;background:#f2f2f2;border-top:1px solid #d8d8d8;box-sizing:border-box;align-items:center}.sw{width:21px;height:21px;box-sizing:border-box;border:1px solid #777;flex:none}.g{display:flex}`}
html(){const sw=['#00a65a','#151515','#fae013','#de2a1b'].map(c=>`<div class="sw" style="background:${c}"></div>`).join('');
return seq([cx(40.500,'dotsV'),cx(52,'ptr'),cx(69,'dropS'),cx(88,'chL'),[100,106,`<div class="g"><div class="sw">${xSwatch(19,19)}</div>${sw}</div>`],cx(1830,'chR'),cx(1852,'more')],36)}}
customElements.define('cdr-colorbar',ColorBar);

class Docker extends Base{css(){return`:host{display:flex;flex:none;width:29px;height:840px;background:#fff}
.l{width:2px;margin:0 0 0 3px;background:#d8d8d8;flex:none}.col{width:23px;flex:none;background:#e9e9e9;display:flex;flex-direction:column;align-items:center;font-size:12.300px;color:#111;border-right:1px solid #c8c8c8}
.x{height:24px;display:flex;align-items:center;justify-content:center;flex:none;align-self:stretch}.tab{align-self:stretch;display:flex;flex-direction:column;align-items:center;flex:none;box-sizing:border-box}
.tab span{writing-mode:vertical-rl;white-space:nowrap;display:block}.t1{background:#b4b4b4;height:145px;padding-top:6px;gap:2px}.t2{background:#d4d4d4;height:168px;margin-top:1px;padding-top:7px;gap:6px}.p{margin-top:21px}`}
html(){return`<div class="l"></div><div class="col"><div class="x">${ic('xBig')}</div><div class="tab t1">${ic('tr')}<span>Transformations</span></div><div class="tab t2">${ic('al')}<span>Align and Distribute</span></div><div class="p">${ic('plus')}</div></div>`}}
customElements.define('cdr-docker',Docker);

class Palette extends Base{css(){return`:host{display:flex;flex-direction:column;width:21px;flex:none;height:840px;background:#f2f2f2;align-items:center}
.sw{width:21px;height:21px;box-sizing:border-box;border-bottom:1px solid #555;flex:none}.red{border:1px solid #fff;border-top:2px solid #fff;border-bottom:2px solid #fff;height:21px}`}
html(){const c=['#181818','#333333','#4d4d4d','#666666','#808080','#999999','#b0b0b0','#c4c6c4','#d9d9d9','#ebebeb','#ffffff','#3f2a96','#00a3dc','#00a65a','#fae013','#de2a1b','#e4007f','#aa4a8a','#f58000','#ffb6bd','#7f7069','#dcd5ef','#b4a4df','#7e98d2','#8e73c6','#9a8cb9','#53688f','#5a5068','#6a7d96','#0096d2','#add8f2','#b4c7d6','#90a3ab','#6b7983'];
return seq([[141,4,ic('dots')],[150,10,ic('ptr')],[168,11,ic('dropD')],[188,8,ic('chU')]],138,'y')+`<div style="margin-top:7px;width:21px;flex:none"><div class="sw">${xSwatch(21,20)}</div>${c.map(v=>`<div class="sw${v=='#de2a1b'?' red':''}" style="background:${v}"></div>`).join('')}</div><div style="margin-top:5px">${ic('chD')}</div><div style="margin-top:14px">${ic('more')}</div>`}}
customElements.define('cdr-palette',Palette);

class Status extends Base{css(){return`:host{display:flex;height:38px;background:#f2f2f2;border-top:1px solid #d8d8d8;align-items:center;font-size:12.300px;color:#1d1d1d;box-sizing:border-box;padding-top:3px}
.xs{width:26px;height:26px;box-sizing:border-box;border:1px solid #999}.k{width:26px;height:26px;box-sizing:border-box;border:1px solid #999;background:#151515}`}
html(){return seq([[7,118,'<span style="font-size:12.600px">( -95.292, 893.681 )</span>','l'],cx(147,'ptr'),cx(1367,'mon'),cx(1405,'fillS'),[1418,26,`<div class="xs">${xSwatch(24,24,1.500)}</div>`],[1448,40,'None','l'],[1643,1,'','','background:#d8d8d8;height:28px'],cx(1665,'pen'),[1676,26,'<div class="k"></div>'],[1712,180,'<span style="font-size:12px">C:0 M:0 Y:0 K:100&nbsp;&nbsp;0.200 mm</span>','l']],0)}}
customElements.define('cdr-statusbar',Status);
</script>
</body></html>
